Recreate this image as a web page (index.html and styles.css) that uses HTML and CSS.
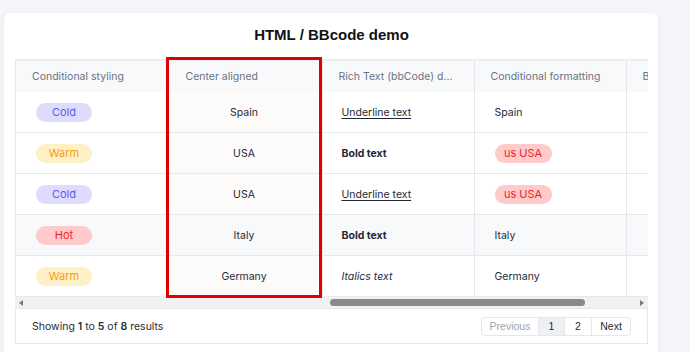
FILE: index.html
```html
<!DOCTYPE html>
<html>
<head>
<meta charset="utf-8">
<link rel="stylesheet" href="styles.css">
</head>
<body>
<div class="card">
  <h1 class="title">HTML / BBcode demo</h1>
  <div class="table-wrap">
    <table class="grid">
      <colgroup>
        <col class="c1"><col class="c2"><col class="c3"><col class="c4"><col class="c5">
      </colgroup>
      <thead>
        <tr>
          <th>Conditional styling</th>
          <th>Center aligned</th>
          <th>Rich Text (bbCode) d...</th>
          <th>Conditional formatting</th>
          <th>Bold</th>
        </tr>
      </thead>
      <tbody>
        <tr>
          <td><span class="pill cold">Cold</span></td>
          <td class="center">Spain</td>
          <td><u>Underline text</u></td>
          <td>Spain</td>
          <td></td>
        </tr>
        <tr>
          <td><span class="pill warm">Warm</span></td>
          <td class="center">USA</td>
          <td><b>Bold text</b></td>
          <td><span class="pill flag">us USA</span></td>
          <td></td>
        </tr>
        <tr>
          <td><span class="pill cold">Cold</span></td>
          <td class="center">USA</td>
          <td><u>Underline text</u></td>
          <td><span class="pill flag">us USA</span></td>
          <td></td>
        </tr>
        <tr class="hover">
          <td><span class="pill hot">Hot</span></td>
          <td class="center">Italy</td>
          <td><b>Bold text</b></td>
          <td>Italy</td>
          <td></td>
        </tr>
        <tr>
          <td><span class="pill warm">Warm</span></td>
          <td class="center">Germany</td>
          <td><i>Italics text</i></td>
          <td>Germany</td>
          <td></td>
        </tr>
      </tbody>
    </table>
  </div>
  <div class="scrollbar">
    <span class="arrow left"></span>
    <div class="track"><div class="thumb"></div></div>
    <span class="arrow right"></span>
  </div>
  <div class="footer">
    <div class="summary">Showing <b>1</b> to <b>5</b> of <b>8</b> results</div>
    <div class="pager">
      <span class="pg prev">Previous</span>
      <span class="pg active">1</span>
      <span class="pg">2</span>
      <span class="pg">Next</span>
    </div>
  </div>
  <div class="highlight"></div>
</div>
</body>
</html>
```

FILE: styles.css
```css
html, body {
  margin: 0;
  padding: 0;
}
body {
  background: #f4f6f9;
  font-family: Inter, "Noto Sans", sans-serif;
  font-size: 10.5px;
  color: #1f2937;
  padding: 13px 0 0 4px;
  height: 352px;
  box-sizing: border-box;
  overflow: hidden;
}
.card {
  position: relative;
  width: 654px;
  height: 339px;
  background: #fff;
  border-radius: 6px 6px 0 0;
  box-shadow: 0 2px 10px rgba(30, 40, 70, 0.06);
  padding: 0 10px 0 11px;
  box-sizing: border-box;
}
.title {
  margin: 0;
  padding: 13px 0 0;
  height: 46px;
  box-sizing: border-box;
  text-align: center;
  font-family: "Liberation Sans", Arial, sans-serif;
  font-size: 15px;
  line-height: 18px;
  font-weight: bold;
  color: #111;
}
.table-wrap {
  width: 633px;
  overflow: hidden;
  border-left: 1px solid #e5e7eb;
  border-top: 2px solid #eceef2;
  box-sizing: border-box;
}
.grid {
  border-collapse: collapse;
  table-layout: fixed;
  width: 762px;
}
.c1 { width: 150px; }
.c2 { width: 156px; }
.c3 { width: 152px; }
.c4 { width: 152px; }
.c5 { width: 152px; }
.grid th {
  height: 31px;
  background: #f8f9fb;
  color: #6b7280;
  font-weight: normal;
  text-align: left;
  padding: 0 0 0 16px;
  border-right: 1px solid #e5e7eb;
  white-space: nowrap;
  overflow: hidden;
}
.grid th:nth-child(2) {
  padding-left: 19px;
}
.grid td {
  height: 40px;
  padding: 0 0 0 19px;
  border-right: 1px solid #e5e7eb;
  border-bottom: 1px solid #e6e8ec;
  white-space: nowrap;
}
.grid td:first-child {
  padding-left: 20px;
}
.grid td:nth-child(4) {
  padding-left: 20px;
}
.grid td.center {
  text-align: center;
  padding: 0;
  background: #fdfbf9;
}
.grid tr.hover td {
  background: #f8f9fb;
}
.grid u {
  text-decoration: underline;
  text-underline-offset: 2px;
}
.pill {
  display: inline-block;
  height: 19px;
  line-height: 19px;
  border-radius: 10px;
  text-align: center;
  width: 56px;
  font-size: 11px;
}
.cold { background: #dedcfd; color: #6356f3; }
.warm { background: #fef1c7; color: #f59e0b; }
.hot  { background: #fecaca; color: #ef1f2a; }
.flag {
  width: 57px;
  background: #fecaca;
  color: #ef1f2a;
}
.scrollbar {
  display: flex;
  align-items: center;
  width: 633px;
  height: 11px;
  background: #f1f1f1;
}
.arrow {
  width: 0;
  height: 0;
  border-top: 3.5px solid transparent;
  border-bottom: 3.5px solid transparent;
}
.arrow.left {
  border-right: 4px solid #7a7a7a;
  margin: 0 0 0 4px;
}
.arrow.right {
  border-left: 4px solid #7a7a7a;
  margin: 0 4px 0 0;
}
.track {
  flex: 1;
  height: 7px;
  position: relative;
  padding-left: 307px;
  padding-right: 55px;
}
.thumb {
  height: 7px;
  border-radius: 4px;
  background: #8a8a8a;
}
.footer {
  display: flex;
  align-items: center;
  justify-content: space-between;
  width: 633px;
  height: 36px;
  box-sizing: border-box;
  border: 1px solid #e5e7eb;
  padding: 0 16px 0 16px;
  color: #1f2937;
}
.summary b {
  font-weight: 600;
}
.pager {
  display: flex;
  border: 1px solid #e5e7eb;
  border-radius: 4px;
  height: 19px;
  box-sizing: border-box;
  overflow: hidden;
  font-family: "Liberation Sans", Arial, sans-serif;
  font-size: 10.5px;
}
.pg {
  display: flex;
  align-items: center;
  justify-content: center;
  color: #1f2937;
  border-left: 1px solid #e5e7eb;
}
.pg:first-child { border-left: none; }
.pg.prev {
  color: #9ca3af;
  width: 56px;
}
.pg.active {
  background: #eef0f3;
  width: 25px;
}
.pager .pg:nth-child(3) { width: 26px; }
.pager .pg:nth-child(4) { width: 38px; }
.highlight {
  position: absolute;
  left: 162px;
  top: 44px;
  width: 156px;
  height: 241px;
  border: 3px solid #e10000;
  box-sizing: border-box;
  pointer-events: none;
}
```
